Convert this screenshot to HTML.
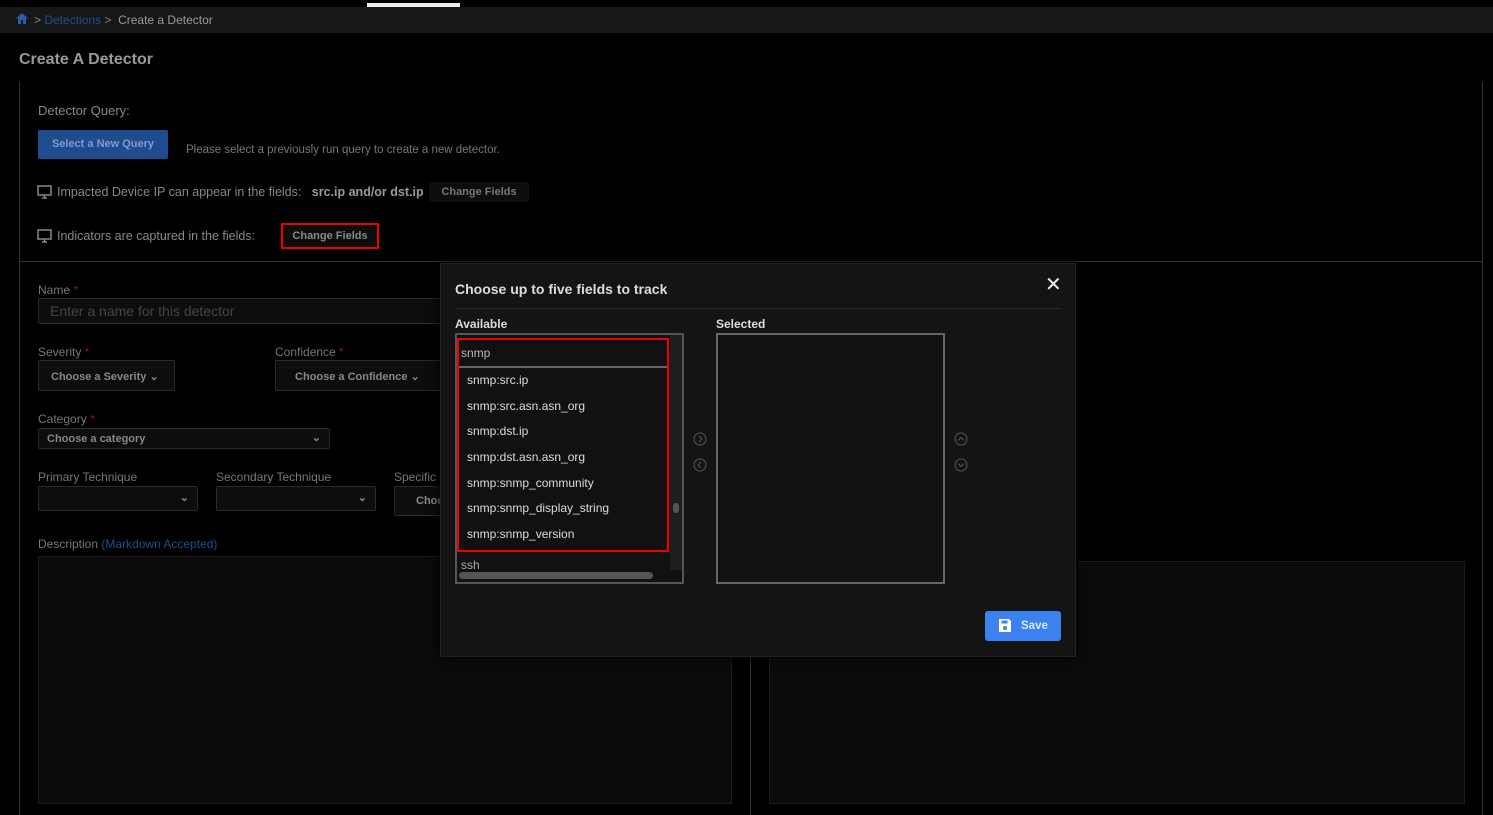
<!DOCTYPE html>
<html><head><style>
*{box-sizing:border-box;margin:0;padding:0}
body{width:1493px;height:815px;background:#000;font-family:"Liberation Sans",sans-serif;position:relative;overflow:hidden;color:#aaa}
.a{position:absolute;white-space:nowrap}
.lbl{font-size:12px;color:#777}
.req{color:#8a1c1c}
.sel{border:1px solid #2a2a2a;background:#0d0d0d;border-radius:2px;font-size:11px;color:#888;font-weight:bold}
.it{position:absolute;left:467px;font-size:12px;color:#ddd}
</style></head><body>
<div class="a" style="left:0;top:0;width:1493px;height:7px;background:#000"></div>
<div class="a" style="left:367px;top:3px;width:93px;height:4px;background:#eee"></div>
<div class="a" style="left:0;top:7px;width:1493px;height:26px;background:#171717"></div>
<svg class="a" style="left:15px;top:12px" width="14" height="13" viewBox="0 0 14 13"><path d="M7 1L1 6.5h2V12h3V8h2v4h3V6.5h2z" fill="#2e5aa8"/></svg>
<div class="a" style="left:34px;top:13px;font-size:12px;color:#888">&gt; <span style="color:#1f4e8f">Detections</span> &gt; &nbsp;<span style="color:#999">Create a Detector</span></div>
<div class="a" style="left:19px;top:51px;font-size:16px;font-weight:bold;color:#999">Create A Detector</div>
<div class="a" style="left:19px;top:82px;width:1px;height:733px;background:#333"></div>
<div class="a" style="left:1482px;top:82px;width:1px;height:733px;background:#333"></div>
<div class="a" style="left:19px;top:261px;width:1464px;height:1px;background:#333"></div>
<div class="a" style="left:38px;top:103px;font-size:13px;color:#888">Detector Query:</div>
<div class="a" style="left:38px;top:130px;width:130px;height:29px;background:#1f4b8f;border-radius:2px;font-size:11px;font-weight:bold;color:#7f9cc8;text-align:center;line-height:29px">Select a New Query</div>
<div class="a" style="left:186px;top:144px;font-size:11.5px;color:#777">Please select a previously run query to create a new detector.</div>
<svg class="a" style="left:37px;top:185px" width="15" height="14"><rect x="1" y="1" width="13" height="9" fill="none" stroke="#888" stroke-width="1.5"/><path d="M5 13h5M7.5 10v3" stroke="#888" stroke-width="1.5"/></svg>
<div class="a" style="left:57px;top:185px;font-size:12.5px;color:#888">Impacted Device IP can appear in the fields: &nbsp;&nbsp;<b style="color:#999">src.ip and/or dst.ip</b></div>
<div class="a" style="left:429px;top:182px;width:100px;height:20px;background:#0d0d0d;font-size:11px;font-weight:bold;color:#777;text-align:center;line-height:20px">Change Fields</div>
<svg class="a" style="left:37px;top:229px" width="15" height="14"><rect x="1" y="1" width="13" height="9" fill="none" stroke="#888" stroke-width="1.5"/><path d="M5 13h5M7.5 10v3" stroke="#888" stroke-width="1.5"/></svg>
<div class="a" style="left:57px;top:229px;font-size:12.5px;color:#888">Indicators are captured in the fields:</div>
<div class="a" style="left:281px;top:223px;width:98px;height:26px;border:2px solid #e00;background:#0d0d0d;font-size:11px;font-weight:bold;color:#888;text-align:center;line-height:22px">Change Fields</div>

<div class="a lbl" style="left:38px;top:283px">Name <span class="req">*</span></div>
<div class="a" style="left:38px;top:298px;width:410px;height:26px;border:1px solid #2a2a2a;background:#0d0d0d;border-radius:2px;font-size:14px;color:#444;padding:4px 11px">Enter a name for this detector</div>
<div class="a lbl" style="left:38px;top:345px">Severity <span class="req">*</span></div>
<div class="a sel" style="left:38px;top:360px;width:137px;height:31px;padding:9px 12px">Choose a Severity ⌄</div>
<div class="a lbl" style="left:275px;top:345px">Confidence <span class="req">*</span></div>
<div class="a sel" style="left:275px;top:360px;width:170px;height:31px;padding:9px 19px">Choose a Confidence ⌄</div>
<div class="a lbl" style="left:38px;top:412px">Category <span class="req">*</span></div>
<div class="a sel" style="left:38px;top:428px;width:292px;height:21px;padding:4px 8px">Choose a category<span style="position:absolute;right:8px;top:2px">⌄</span></div>
<div class="a lbl" style="left:38px;top:470px">Primary Technique</div>
<div class="a sel" style="left:38px;top:486px;width:160px;height:25px"><span style="position:absolute;right:8px;top:4px">⌄</span></div>
<div class="a lbl" style="left:216px;top:470px">Secondary Technique</div>
<div class="a sel" style="left:216px;top:486px;width:160px;height:25px"><span style="position:absolute;right:8px;top:4px">⌄</span></div>
<div class="a lbl" style="left:394px;top:470px">Specific</div>
<div class="a sel" style="left:394px;top:486px;width:60px;height:30px;padding:8px 21px">Choo</div>
<div class="a lbl" style="left:38px;top:537px">Description <span style="color:#1b4f8a">(Markdown Accepted)</span></div>
<div class="a" style="left:38px;top:556px;width:694px;height:248px;border:1px solid #1c1c1c;background:#0b0b0b"></div>
<div class="a" style="left:750px;top:560px;width:1px;height:255px;background:#333"></div>
<div class="a" style="left:769px;top:561px;width:696px;height:243px;border:1px solid #1c1c1c;background:#0b0b0b"></div>

<div class="a" style="left:440px;top:263px;width:636px;height:394px;background:#141414;border:1px solid #222;box-shadow:0 0 10px #000"></div>
<div class="a" style="left:455px;top:281px;font-size:14px;font-weight:bold;color:#ddd">Choose up to five fields to track</div>
<div class="a" style="left:1045px;top:272px;font-size:20px;color:#eee">✕</div>
<div class="a" style="left:455px;top:308px;width:605px;height:1px;background:#2a2a2a"></div>
<div class="a" style="left:455px;top:317px;font-size:12px;font-weight:bold;color:#ddd">Available</div>
<div class="a" style="left:716px;top:317px;font-size:12px;font-weight:bold;color:#ddd">Selected</div>
<div class="a" style="left:455px;top:333px;width:229px;height:251px;border:2px solid #555;background:#111"></div>
<div class="a" style="left:670px;top:335px;width:12px;height:235px;background:#1e1e1e"></div>
<div class="a" style="left:673px;top:503px;width:6px;height:10px;background:#555;border-radius:3px"></div>
<div class="a" style="left:459px;top:572px;width:194px;height:7px;background:#555;border-radius:4px"></div>
<div class="a" style="left:457px;top:338px;width:212px;height:214px;border:2px solid #e00"></div>
<div class="a" style="left:459px;top:366px;width:208px;height:2px;background:#666"></div>
<div class="a" style="left:461px;top:346px;font-size:12px;color:#bbb">snmp</div>
<div class="it" style="top:373px">snmp:src.ip</div>
<div class="it" style="top:399px">snmp:src.asn.asn_org</div>
<div class="it" style="top:424px">snmp:dst.ip</div>
<div class="it" style="top:450px">snmp:dst.asn.asn_org</div>
<div class="it" style="top:476px">snmp:snmp_community</div>
<div class="it" style="top:501px">snmp:snmp_display_string</div>
<div class="it" style="top:527px">snmp:snmp_version</div>
<div class="a" style="left:461px;top:558px;font-size:12px;color:#aaa">ssh</div>
<div class="a" style="left:716px;top:333px;width:229px;height:251px;border:2px solid #666;background:#111"></div>
<svg class="a" style="left:692px;top:432px" width="16" height="42"><circle cx="8" cy="7" r="6" fill="none" stroke="#555"/><path d="M7 4l3 3-3 3" fill="none" stroke="#555"/><circle cx="8" cy="33" r="6" fill="none" stroke="#555"/><path d="M9 30l-3 3 3 3" fill="none" stroke="#555"/></svg>
<svg class="a" style="left:953px;top:432px" width="16" height="42"><circle cx="8" cy="7" r="6" fill="none" stroke="#555"/><path d="M5 8.5l3-3 3 3" fill="none" stroke="#555"/><circle cx="8" cy="33" r="6" fill="none" stroke="#555"/><path d="M5 31.5l3 3 3-3" fill="none" stroke="#555"/></svg>
<div class="a" style="left:985px;top:611px;width:76px;height:30px;background:#3b82f0;border-radius:3px;font-size:11.5px;font-weight:bold;color:#dde8ff;line-height:30px;padding-left:36px">Save</div>
<svg class="a" style="left:998px;top:618px" width="14" height="15"><path d="M1 1h10l2 2v11H1z" fill="#fff"/><rect x="3.5" y="2.5" width="6" height="3" fill="#3b82f0"/><circle cx="7" cy="10" r="2" fill="#3b82f0"/></svg>
</body></html>
